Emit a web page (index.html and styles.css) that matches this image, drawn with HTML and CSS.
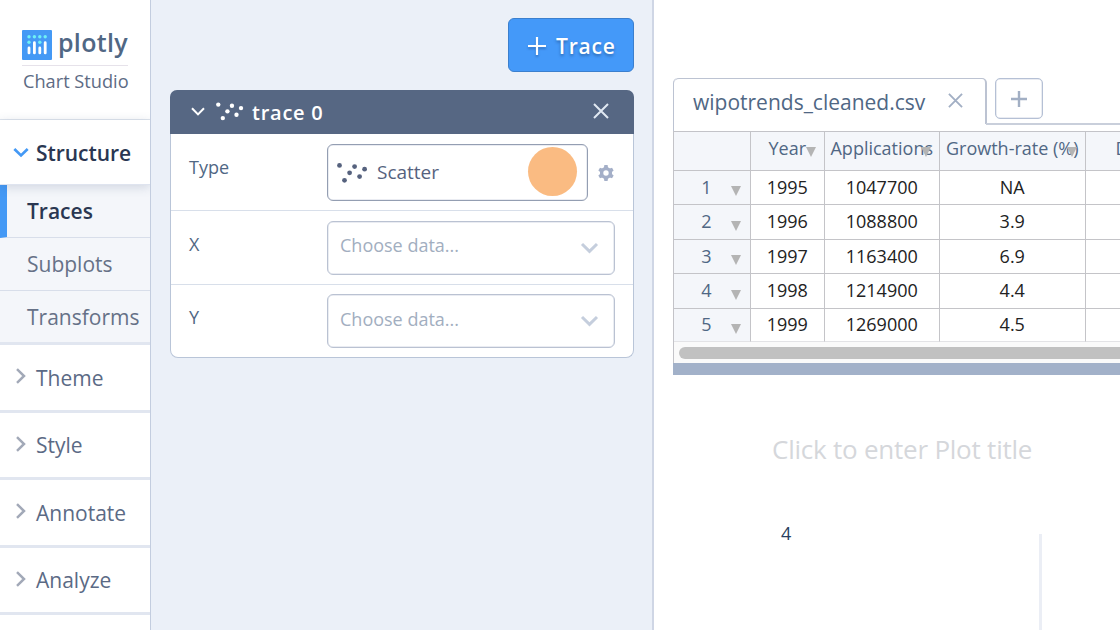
FILE: index.html
```html
<!DOCTYPE html>
<html lang="en">
<head>
<meta charset="utf-8">
<title>Plotly Chart Studio</title>
<link rel="stylesheet" href="styles.css">
</head>
<body>
<svg class="defs" width="0" height="0" aria-hidden="true">
  <symbol id="scatter" viewBox="0 0 32 20"><g fill="currentColor"><circle cx="2.5" cy="2.4" r="2.4"/><circle cx="17.6" cy="3.6" r="2.4"/><circle cx="27.6" cy="6.2" r="2.4"/><circle cx="12.6" cy="9.8" r="2.4"/><circle cx="22.6" cy="13.6" r="2.4"/><circle cx="7.5" cy="17.3" r="2.4"/></g></symbol>
  <symbol id="right" viewBox="0 0 10 16"><path d="M1 1.2 8 8 1 14.8" fill="none" stroke="currentColor" stroke-width="2.5"/></symbol>
  <symbol id="down" viewBox="0 0 18 12"><path d="M1.5 2 9 9.3 16.5 2" fill="none" stroke="currentColor" stroke-width="3"/></symbol>
  <symbol id="cross" viewBox="0 0 16 16"><path d="M1 1 15 15M15 1 1 15" fill="none" stroke="currentColor" stroke-width="2"/></symbol>
</svg>
<div class="app">
  <aside class="sidebar">
    <header class="brand">
      <div class="logo">
        <svg width="30" height="30" viewBox="0 0 30 30"><rect width="30" height="30" rx="1" fill="#4499f5"/><g fill="#6ff0f5"><circle cx="7" cy="6.8" r="1.7"/><circle cx="12.4" cy="6.8" r="1.7"/><circle cx="17.8" cy="6.8" r="1.7"/><circle cx="23.2" cy="6.8" r="1.7"/><circle cx="7" cy="12.3" r="1.7"/><circle cx="17.8" cy="12.3" r="1.7"/></g><g stroke="#fff" stroke-width="2.8" stroke-linecap="round"><path d="M7 18v4.9M12.4 12.7v10.2M17.8 18v4.9M23.2 12.7v10.2"/></g></svg>
        <span class="wordmark">plotly</span>
      </div>
      <div class="product">Chart Studio</div>
    </header>
    <nav>
      <div class="section open"><svg width="16" height="11"><use href="#down"/></svg><span>Structure</span></div>
      <div class="sub active">Traces</div>
      <div class="sub">Subplots</div>
      <div class="sub last">Transforms</div>
      <div class="section"><svg width="10" height="16"><use href="#right"/></svg><span>Theme</span></div>
      <div class="section"><svg width="10" height="16"><use href="#right"/></svg><span>Style</span></div>
      <div class="section"><svg width="10" height="16"><use href="#right"/></svg><span>Annotate</span></div>
      <div class="section"><svg width="10" height="16"><use href="#right"/></svg><span>Analyze</span></div>
    </nav>
  </aside>
  <main class="panel">
    <button class="add"><svg width="18" height="18" viewBox="0 0 18 18"><path d="M9 0v18M0 9h18" stroke="#fff" stroke-width="2.2"/></svg><span>Trace</span></button>
    <section class="card">
      <header class="card-head">
        <svg width="14" height="9" viewBox="0 0 14 9"><path d="M1 1.2 7 7.4 13 1.2" fill="none" stroke="#fff" stroke-width="2"/></svg>
        <svg class="head-scatter" width="29" height="19"><use href="#scatter"/></svg>
        <span>trace 0</span>
        <svg class="close" width="16" height="16"><use href="#cross"/></svg>
      </header>
      <div class="field first">
        <label>Type</label>
        <div class="select type"><svg width="32" height="20"><use href="#scatter"/></svg><span>Scatter</span><i class="pointer"></i></div>
        <svg class="gear" width="16" height="16" viewBox="0 0 16 16"><circle cx="8" cy="8" r="4.4" fill="none" stroke="currentColor" stroke-width="3.4"/><g fill="currentColor"><path id="tooth" d="M5.8 3.2 6.4.1h3.2l.6 3.1z"/><use href="#tooth" transform="rotate(60 8 8)"/><use href="#tooth" transform="rotate(120 8 8)"/><use href="#tooth" transform="rotate(180 8 8)"/><use href="#tooth" transform="rotate(240 8 8)"/><use href="#tooth" transform="rotate(300 8 8)"/></g></svg>
      </div>
      <div class="field"><label>X</label><div class="select"><span>Choose data...</span><svg width="19" height="12"><use href="#down"/></svg></div></div>
      <div class="field"><label>Y</label><div class="select"><span>Choose data...</span><svg width="19" height="12"><use href="#down"/></svg></div></div>
    </section>
  </main>
  <section class="workspace">
    <div class="tabs">
      <div class="tab"><span>wipotrends_cleaned.csv</span><svg width="15" height="15"><use href="#cross" /></svg></div>
      <div class="tab-rest"><button class="new-tab"><svg width="16" height="16" viewBox="0 0 16 16"><path d="M8 0v16M0 8h16" stroke="#a2afc4" stroke-width="2.4"/></svg></button></div>
    </div>
    <div class="grid">
      <div class="row head"><div class="cell num"></div><div class="cell">Year<i class="arrow"></i></div><div class="cell">Applications<i class="arrow"></i></div><div class="cell">Growth-rate (%)<i class="arrow"></i></div><div class="cell cut">D</div></div>
      <div class="row"><div class="cell num">1<i class="arrow"></i></div><div class="cell">1995</div><div class="cell">1047700</div><div class="cell">NA</div><div class="cell"></div></div>
      <div class="row"><div class="cell num">2<i class="arrow"></i></div><div class="cell">1996</div><div class="cell">1088800</div><div class="cell">3.9</div><div class="cell"></div></div>
      <div class="row"><div class="cell num">3<i class="arrow"></i></div><div class="cell">1997</div><div class="cell">1163400</div><div class="cell">6.9</div><div class="cell"></div></div>
      <div class="row"><div class="cell num">4<i class="arrow"></i></div><div class="cell">1998</div><div class="cell">1214900</div><div class="cell">4.4</div><div class="cell"></div></div>
      <div class="row final"><div class="cell num">5<i class="arrow"></i></div><div class="cell">1999</div><div class="cell">1269000</div><div class="cell">4.5</div><div class="cell"></div></div>
      <div class="scroll"><div class="thumb"></div></div>
    </div>
    <div class="divider"></div>
    <div class="plot">
      <div class="plot-title">Click to enter Plot title</div>
      <div class="axes"><span class="tick">4</span><span class="gridline"></span></div>
    </div>
  </section>
</div>
</body>
</html>
```
FILE: styles.css
```css
* { box-sizing: border-box; }
body { margin: 0; overflow: hidden; font-family: "Open Sans", sans-serif; color: #506784; background: #fff; }
svg { display: block; flex: none; }
button { font: inherit; padding: 0; }
.defs { position: absolute; }
.app { display: flex; width: 1120px; height: 630px; overflow: hidden; }

.sidebar { flex: none; width: 151px; border-right: 1px solid #c3cddf; background: #fff; overflow: hidden; }
.brand { height: 120px; padding: 30px 22px 0; border-bottom: 1px solid #dfe5ed; box-shadow: 0 0 6px rgba(80,100,140,.12); }
.logo { display: flex; gap: 6px; height: 36px; border-bottom: 1px solid #e6e2ea; width: 106px; }
.wordmark { font-weight: 600; font-size: 25px; letter-spacing: .3px; line-height: 25px; }
.product { margin: 2px 0 0 1px; font-size: 18.2px; line-height: 26px; white-space: nowrap; color: #5d6b84; }
.section { display: flex; align-items: center; height: 67.5px; padding: 0 0 0 16px; border-bottom: 3px solid #e1e6f0; font-size: 21px; color: #5b6a85; background: #fff; }
.section svg { color: #a2a9b8; margin-top: -2px; }
.section span { margin-left: 10px; padding-top: 1px; }
.open { height: 65px; padding-left: 13px; border-bottom: 1px solid #dfe4ef; font-weight: 600; color: #2a3752; box-shadow: 0 2px 10px rgba(60,80,120,.2); position: relative; font-size: 21px; letter-spacing: -.05px; }
.open svg { color: #4499f5; margin-top: 1px; }
.open span { margin-left: 7px; }
.sub { height: 53px; padding-left: 27px; font-size: 21px; line-height: 52px; border-bottom: 1px solid #d8deea; color: #667187; background: #f4f6fa; }
.active { border-left: 7px solid #4499f5; padding-left: 20px; font-weight: 600; color: #2a3752; }
.last { height: 54px; line-height: 52px; border-bottom: 3px solid #e1e6f0; }

.panel { flex: none; width: 503px; padding: 18px 19px 18px 18px; background: #ebf0f8; border-right: 2px solid #cfd6e5; }
.add { display: flex; align-items: center; gap: 10px; width: 126px; height: 54px; margin: 0 -1px 0 auto; padding-left: 19px; border: 1px solid #3b7fce; border-radius: 6px; background: #4499f9; color: #fff; font-weight: 600; font-size: 21px; letter-spacing: .8px; text-shadow: 0 2px 3px rgba(20,50,100,.45); }
.add svg { margin-top: 2px; filter: drop-shadow(0 2px 1px rgba(20,50,100,.35)); }
.add span { padding-top: 2px; }
.card { width: 464px; height: 268px; margin: 18px 0 0 1px; border: 1px solid #b9c5d8; border-top: 0; border-radius: 8px; background: #fff; }
.card-head { display: flex; align-items: center; height: 43.5px; margin: 0 -1px; padding: 0 25px 0 21px; border-radius: 7px 7px 0 0; background: #566783; color: #fff; font-size: 20px; font-weight: 600; letter-spacing: .75px; }
.card-head span { padding-top: 1px; }
.head-scatter { margin: 0 7px 0 11px; }
.close { margin: -2px 0 0 auto; color: #e0e8f2; }
.field { display: flex; height: 73.5px; padding: 9.5px 17px 0 18px; border-top: 1px solid #d8dfea; }
.first { height: 76.5px; padding-top: 10.5px; border-top: 0; }
.field label { flex: none; width: 138px; padding-top: 10px; font-size: 18px; line-height: 26px; }
.select { display: flex; flex: none; align-items: center; justify-content: space-between; width: 288px; height: 54px; padding: 0 15px 0 12px; border: 1px solid #bac2d2; box-shadow: inset 0 0 0 .5px #d5dae5; border-radius: 6px; font-size: 18px; color: #a2aec0; }
.select span { padding-bottom: 5px; }
.select svg { color: #c5cedd; }
.type { width: 261px; height: 57px; padding: 0 10px 0 9px; border-color: #949eb2; justify-content: flex-start; font-size: 19px; color: #56627e; }
.type svg { color: #56627e; }
.type span { margin-left: 8px; padding: 0 0 1px; }
.pointer { width: 49px; height: 49px; margin: -3px 0 0 auto; border-radius: 50%; background: #fabb82; }
.gear { margin: 21px 0 0 10px; color: #a4afc8; }

.workspace { flex: none; width: 466px; padding: 78px 0 0 19px; overflow: hidden; }
.tabs { display: flex; height: 52.5px; border-left: 1px solid #bcc3d2; border-top-left-radius: 5px; }
.tab { display: flex; align-items: center; justify-content: space-between; flex: none; width: 313px; height: 46px; padding: 0 22px 0 19px; border: solid #bcc3d2; border-width: 1px 2px 0 0; border-radius: 5px 5px 0 0; font-size: 21px; color: #506784; }
.tab svg { color: #a2afc4; margin-top: -2px; }
.tab-rest { flex: 1; height: 47px; margin-left: -1px; padding-left: 9px; border-bottom: 2px solid #c9cfdb; }
.new-tab { display: flex; align-items: center; justify-content: center; width: 48px; height: 41px; border: 1px solid #b5c0d5; box-shadow: inset 0 0 0 .5px #d5dae5; border-radius: 5px; background: #fff; }
.grid { width: 447px; height: 232.5px; overflow: hidden; border-left: 1px solid #c3c3c8; border-top: 1px solid #c3c3c8; }
.row { display: grid; grid-template-columns: 77px 73.5px 115.5px 145.5px 35px; height: 34.5px; font-size: 18px; color: #222; }
.row.head { height: 39px; color: #506784; }
.row.final { height: 33px; }
.cell { position: relative; display: flex; align-items: center; justify-content: center; padding-bottom: 1px; border: solid #c4c4c8; border-width: 0 1px 1px 0; white-space: nowrap; }
.cell:last-child { border-right: 0; }
.head .cell { padding-bottom: 6px; background: #f4f6fa; }
.cell.num { padding-right: 11px; background: #f4f6fa; color: #506784; }
.head .cell.cut { justify-content: flex-start; padding-left: 30px; overflow: hidden; }
.arrow { position: absolute; right: 9px; bottom: 8px; border: 5px solid transparent; border-top: 10px solid #b4b4b4; border-bottom: 0; }
.head .arrow { right: 8px; bottom: 13px; }
.final .arrow { bottom: 7px; }
.final .cell { border-bottom-color: #e3e3e6; }
.scroll { height: 22px; padding: 5px 0 0 5px; background: #fafafa; }
.thumb { height: 12px; border-radius: 6px 0 0 6px; background: #c1c1c1; }
.divider { height: 12px; background: #a2b1c9; }
.plot-title { padding: 56px 0 0 99px; font-size: 26px; letter-spacing: -.23px; line-height: 36px; color: #d5d7db; white-space: nowrap; }
.axes { display: flex; align-items: flex-start; padding: 67px 0 0 108px; height: 180px; }
.tick { width: 10px; font-size: 18px; line-height: 1; margin-top: -10px; color: #2a3f5f; }
.gridline { width: 3px; height: 104px; margin-left: 248px; background: #ebeef5; }
```
